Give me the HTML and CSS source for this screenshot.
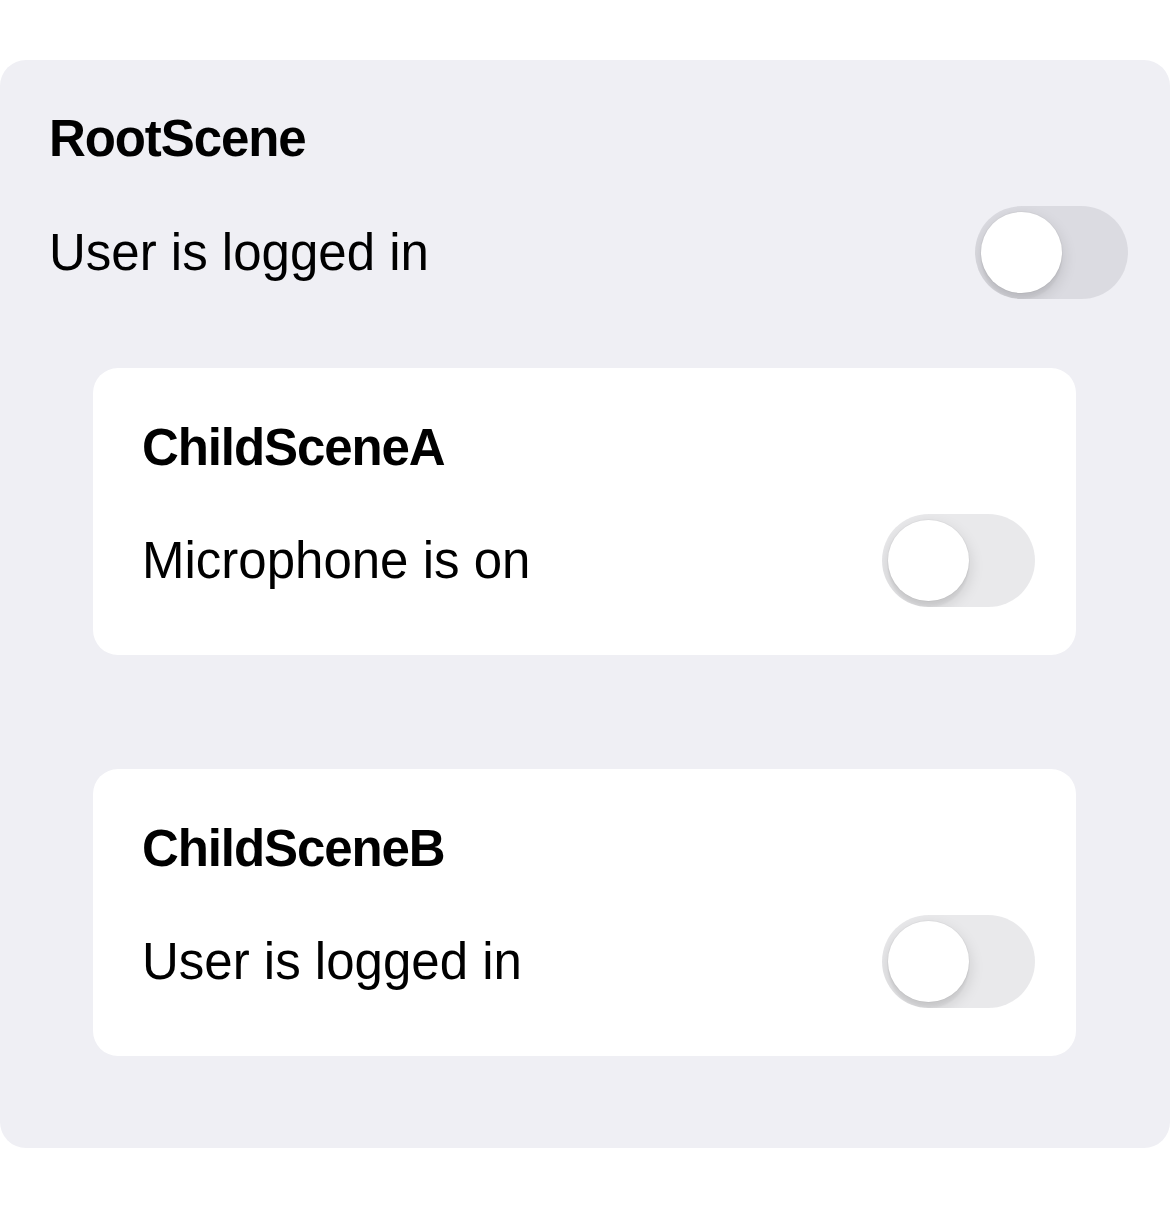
FILE: index.html
```html
<!DOCTYPE html>
<html lang="en">
<head>
<meta charset="utf-8">
<title>Scenes</title>
<link rel="stylesheet" href="styles.css">
</head>
<body>
  <section class="scene root">
    <h2 class="scene-title">RootScene</h2>
    <div class="row">
      <span class="label">User is logged in</span>
      <span class="switch"><span class="knob"></span></span>
    </div>
    <section class="scene child child-a">
      <h2 class="scene-title">ChildSceneA</h2>
      <div class="row">
        <span class="label">Microphone is on</span>
        <span class="switch"><span class="knob"></span></span>
      </div>
    </section>
    <section class="scene child child-b">
      <h2 class="scene-title">ChildSceneB</h2>
      <div class="row">
        <span class="label">User is logged in</span>
        <span class="switch"><span class="knob"></span></span>
      </div>
    </section>
  </section>
</body>
</html>
```

FILE: styles.css
```css
html, body {
  margin: 0;
  padding: 0;
  background: #ffffff;
}

body {
  font-family: "Liberation Sans", Arial, sans-serif;
  color: #000000;
  padding-top: 60px;
}

.scene {
  display: flex;
  flex-direction: column;
}

.root {
  background: #efeff4;
  border-radius: 26px;
  padding: 50px 42px 92px 49px;
}

.scene-title {
  margin: 0;
  font-size: 51px;
  line-height: 58px;
  font-weight: 700;
  letter-spacing: -1.1px;
}

.row {
  display: flex;
  align-items: center;
  justify-content: space-between;
  margin-top: 38px;
}

.label {
  font-size: 51px;
  line-height: 58px;
  font-weight: 400;
}

.switch {
  width: 153px;
  height: 93px;
  border-radius: 47px;
  background: rgba(120, 120, 128, 0.16);
  overflow: hidden;
  display: flex;
  align-items: center;
  padding-left: 6px;
  box-sizing: border-box;
  flex: none;
}

.knob {
  width: 81px;
  height: 81px;
  border-radius: 50%;
  background: #ffffff;
  box-shadow: 0 6px 16px rgba(0, 0, 0, 0.14), 0 6px 2px rgba(0, 0, 0, 0.04), 0 0 0 1px rgba(0, 0, 0, 0.03);
}

.child {
  background: #ffffff;
  border-radius: 25px;
  margin-left: 44px;
  margin-right: 52px;
  padding: 51px 41px 48px 49px;
}

.child .row {
  margin-top: 37px;
}

.child-a {
  margin-top: 69px;
}

.child-b {
  margin-top: 114px;
}
```
